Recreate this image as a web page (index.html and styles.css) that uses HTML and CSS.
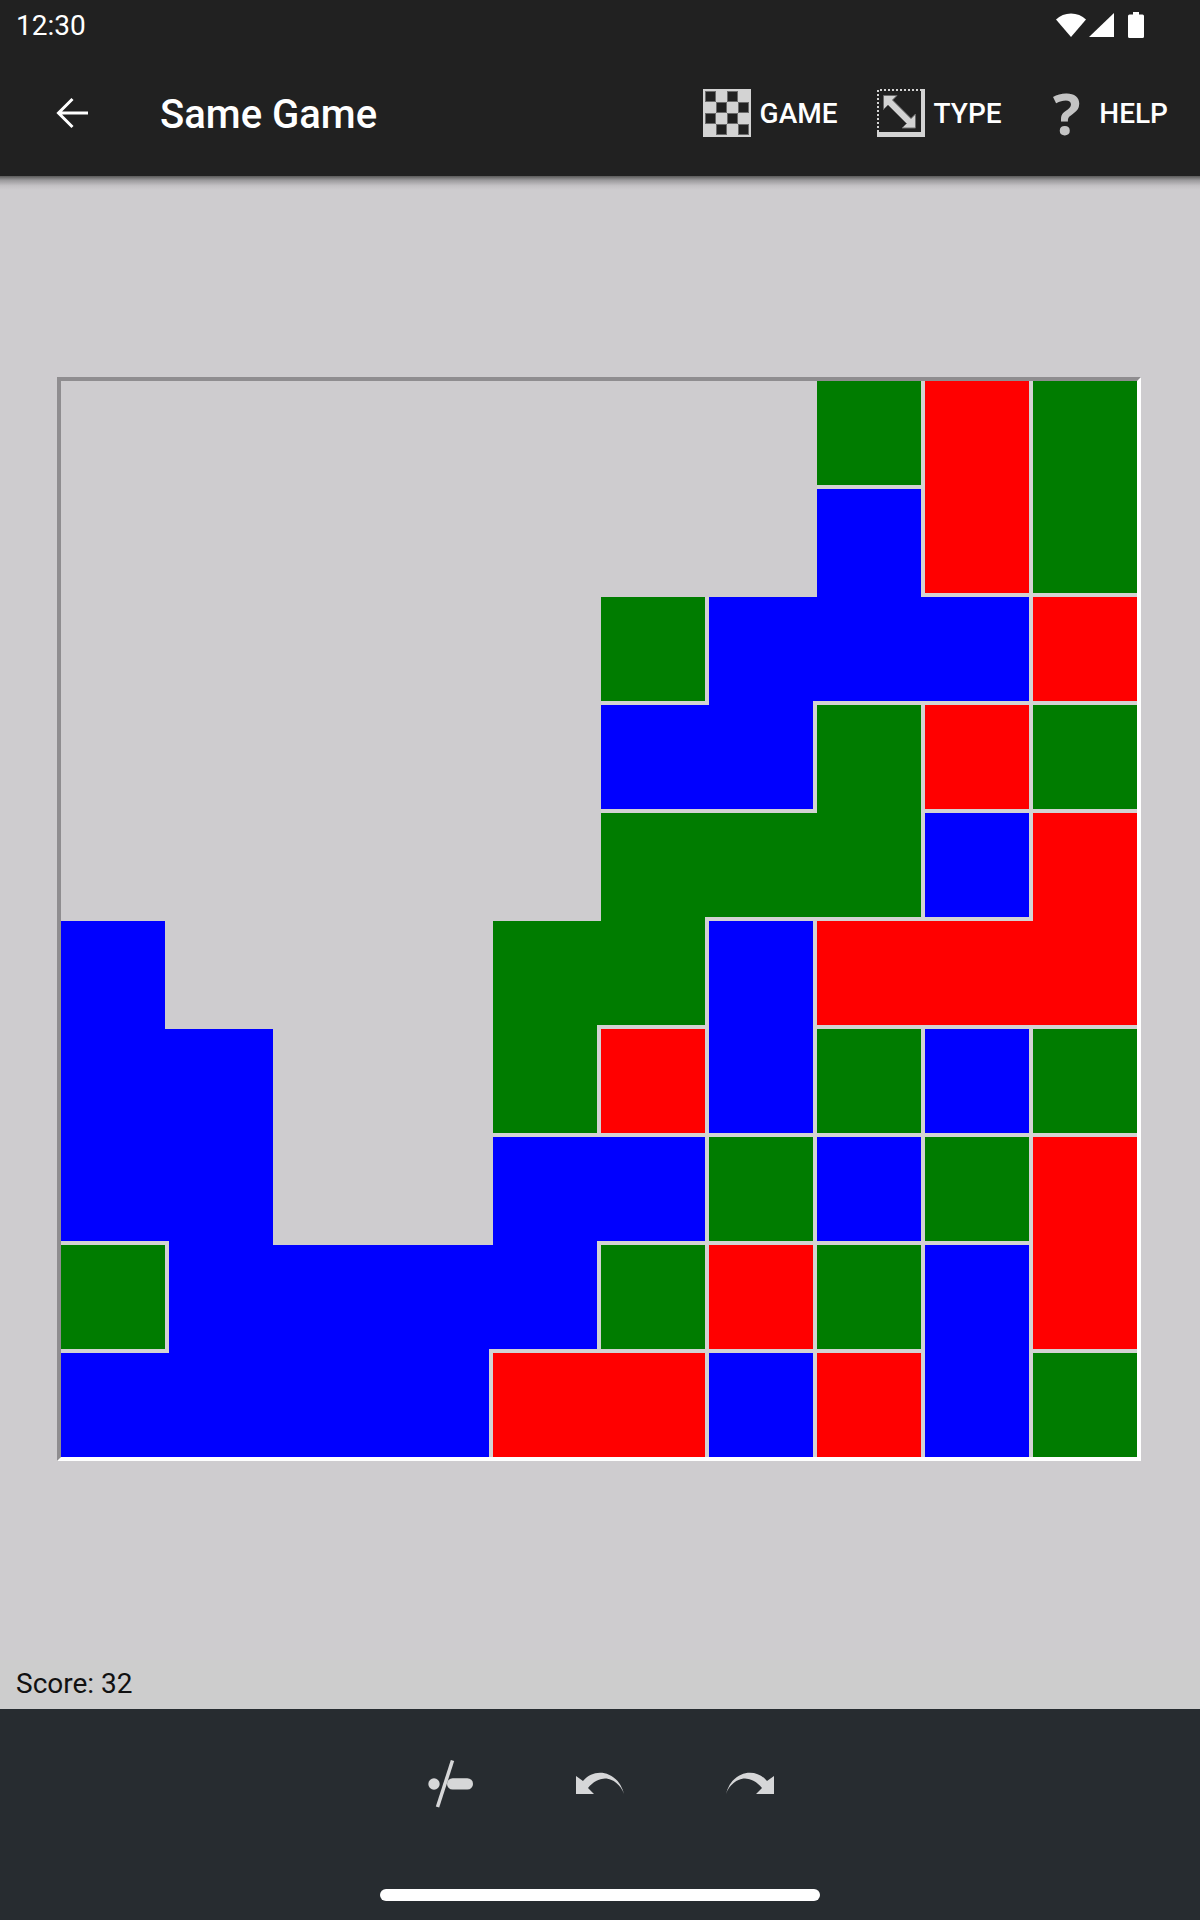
FILE: index.html
```html
<!DOCTYPE html>
<html lang="en">
  <head>
    <meta charset="UTF-8" />
    <meta name="viewport" content="width=device-width, initial-scale=1" />
    <title>Same Game</title>
    <link rel="stylesheet" href="styles.css">
  </head>
  <body>
    <header class="appbar">
      <div class="status">
        <span class="clock">12:30</span>
        <div class="status-icons">
          <svg class="ic-wifi" width="30" height="24" viewBox="0 0 30 24"><path d="M0 6.500C4 2.700 9.200.5 15 .5s11 2.200 15 6L15 24z" fill="#fff"/></svg>
          <svg class="ic-signal" width="25" height="24" viewBox="0 0 25 24"><path d="M25 0V24H0z" fill="#fff"/></svg>
          <svg class="ic-battery" width="16" height="26" viewBox="0 0 16 26"><path d="M5 0h6v2.500h3.500q1.500 0 1.500 1.500v20.500q0 1.500-1.500 1.500h-13q-1.500 0-1.500-1.500V4q0-1.500 1.500-1.500H5z" fill="#fff"/></svg>
        </div>
      </div>
      <div class="toolbar">
        <svg class="back" width="34" height="32" viewBox="0 0 34 32"><path d="M33 16H3M17.500 2L3.500 16l14 14" fill="none" stroke="#fff" stroke-width="3"/></svg>
        <h1 class="title">Same Game</h1>
        <nav class="menu">
          <div class="menu-item game">
            <svg width="48" height="48" viewBox="0 0 48 48">
              <rect width="48" height="48" fill="#d3d3d3"/>
              <g fill="#212121" stroke="#6a6a6a">
                <rect x="2.500" y="2.500" width="10" height="10"/>
                <rect x="24.500" y="2.500" width="10" height="10"/>
                <rect x="13.500" y="13.500" width="10" height="10"/>
                <rect x="35.500" y="13.500" width="10" height="10"/>
                <rect x="2.500" y="24.500" width="10" height="10"/>
                <rect x="24.500" y="24.500" width="10" height="10"/>
                <rect x="13.500" y="35.500" width="10" height="10"/>
                <rect x="35.500" y="35.500" width="10" height="10"/>
              </g>
            </svg>
            <span>GAME</span>
          </div>
          <div class="menu-item type">
            <svg width="48" height="48" viewBox="0 0 48 48">
              <path d="M44 0h4v48H0v-5h44z" fill="#d3d3d3"/>
              <path d="M1 43V1h43" fill="none" stroke="#d3d3d3" stroke-width="2" stroke-dasharray="2 2"/>
              <path d="M6.500 6.500H20L15.500 11 34 29.500l4.500-4.500V39H25l4.500-4.500L11 16l-4.500 4.500z" fill="#d3d3d3" stroke="#6a6a6a"/>
            </svg>
            <span>TYPE</span>
          </div>
          <div class="menu-item help">
            <b class="qmark">?</b>
            <span>HELP</span>
          </div>
        </nav>
      </div>
    </header>

    <main class="content">
      <div class="board">
        <div class="cell e"></div><div class="cell e"></div><div class="cell e"></div><div class="cell e"></div><div class="cell e"></div><div class="cell e"></div><div class="cell e"></div><div class="cell g r b"></div><div class="cell f r"></div><div class="cell g"></div>
        <div class="cell e"></div><div class="cell e"></div><div class="cell e"></div><div class="cell e"></div><div class="cell e"></div><div class="cell e"></div><div class="cell e"></div><div class="cell u r"></div><div class="cell f r b"></div><div class="cell g b"></div>
        <div class="cell e"></div><div class="cell e"></div><div class="cell e"></div><div class="cell e"></div><div class="cell e"></div><div class="cell g r b"></div><div class="cell u c"></div><div class="cell u b"></div><div class="cell u r b"></div><div class="cell f b"></div>
        <div class="cell e"></div><div class="cell e"></div><div class="cell e"></div><div class="cell e"></div><div class="cell e"></div><div class="cell u b"></div><div class="cell u r b"></div><div class="cell g r"></div><div class="cell f r b"></div><div class="cell g b"></div>
        <div class="cell e"></div><div class="cell e"></div><div class="cell e"></div><div class="cell e"></div><div class="cell e"></div><div class="cell g c"></div><div class="cell g b"></div><div class="cell g r b"></div><div class="cell u r b"></div><div class="cell f"></div>
        <div class="cell u r n"></div><div class="cell e"></div><div class="cell e"></div><div class="cell e"></div><div class="cell g c"></div><div class="cell g r b"></div><div class="cell u r"></div><div class="cell f b"></div><div class="cell f b"></div><div class="cell f b"></div>
        <div class="cell u"></div><div class="cell u r n"></div><div class="cell e"></div><div class="cell e"></div><div class="cell g r b"></div><div class="cell f r b"></div><div class="cell u r b"></div><div class="cell g r b"></div><div class="cell u r b"></div><div class="cell g b"></div>
        <div class="cell u b"></div><div class="cell u r n"></div><div class="cell e"></div><div class="cell e"></div><div class="cell u c"></div><div class="cell u r b"></div><div class="cell g r b"></div><div class="cell u r b"></div><div class="cell g r b"></div><div class="cell f"></div>
        <div class="cell g r b"></div><div class="cell u"></div><div class="cell u"></div><div class="cell u c"></div><div class="cell u r b"></div><div class="cell g r b"></div><div class="cell f r b"></div><div class="cell g r b"></div><div class="cell u r"></div><div class="cell f b"></div>
        <div class="cell u"></div><div class="cell u"></div><div class="cell u"></div><div class="cell u r"></div><div class="cell f"></div><div class="cell f r"></div><div class="cell u r"></div><div class="cell f r"></div><div class="cell u r"></div><div class="cell g"></div>
      </div>
      <p class="score">Score: 32</p>
    </main>

    <footer class="bottom">
      <div class="actions">
        <svg class="act" width="48" height="48" viewBox="0 0 48 48"><circle cx="8" cy="24" r="5.700" fill="#d6d7d8"/><rect x="21" y="18.200" width="26" height="11.400" rx="5.700" fill="#d6d7d8"/><path d="M26.500.500L11.500 47" stroke="#d6d7d8" stroke-width="3.500"/></svg>
        <svg class="act" width="48" height="48" viewBox="0 0 48 48"><path d="M0 16V34H18L12 28C17 22 23 18.500 29 18.500 37 18.500 45 25 48 34 45 21 35 12.700 24 12.700 17 12.700 11 16 7 21Z" fill="#d6d7d8"/></svg>
        <svg class="act flip" width="48" height="48" viewBox="0 0 48 48"><path d="M0 16V34H18L12 28C17 22 23 18.500 29 18.500 37 18.500 45 25 48 34 45 21 35 12.700 24 12.700 17 12.700 11 16 7 21Z" fill="#d6d7d8"/></svg>
      </div>
      <div class="home-pill"></div>
    </footer>
  </body>
</html>
```

FILE: styles.css
```css
html,
body {
  height: 100%;
  margin: 0;
  padding: 0;
  overflow: hidden;
}
body {
  display: flex;
  flex-direction: column;
  background: #cecccf;
  font-family: Roboto, "Liberation Sans", sans-serif;
}

.appbar {
  position: relative;
  background: #212121;
  color: #fff;
  height: 176px;
}
/* shadow that falls on the content */
.appbar::after {
  content: "";
  position: absolute;
  left: 0;
  right: 0;
  top: 176px;
  height: 14px;
  background: linear-gradient(#5a5a5a, #9a999b 30%, #c4c2c5 70%, #cecccf);
}

.status {
  height: 50px;
  display: flex;
  align-items: center;
  justify-content: space-between;
  padding: 0 56px 0 16px;
}
.clock {
  font-size: 28px;
  font-weight: 400;
}
.status-icons {
  display: flex;
  align-items: center;
  gap: 3px;
}
.ic-battery {
  margin-left: 11px;
}

.toolbar {
  height: 126px;
  display: flex;
  align-items: center;
  padding-right: 32px;
}
.back {
  margin-left: 55px;
}
.title {
  margin: 2px 0 0 71px;
  font-size: 40px;
  font-weight: 500;
}
.menu {
  margin-left: auto;
  display: flex;
  align-items: center;
}
.menu-item {
  display: flex;
  align-items: center;
  gap: 9px;
  font-size: 28px;
  font-weight: 500;
}
.menu-item svg {
  display: block;
}
.type {
  margin-left: 39px;
}
.help {
  margin-left: 51px;
  gap: 19px;
}
.qmark {
  font-family: "Noto Sans", sans-serif;
  font-size: 58px;
  line-height: 48px;
  color: #c4c4c4;
}

.content {
  flex: 1;
  display: flex;
  flex-direction: column;
  padding-top: 201px;
}
.board {
  box-sizing: border-box;
  width: 1084px;
  height: 1084px;
  margin-left: 57px;
  display: grid;
  /* 104px blocks with a 4px seam, the last line has no seam */
  grid-template-columns: repeat(9, 108px) 104px;
  grid-template-rows: repeat(9, 108px) 104px;
  border: 4px solid;
  border-color: #8f8d90 #fff #fff #8f8d90;
}
.cell {
  box-sizing: border-box;
  border: 0 solid #d3d3d3;
}
.e {
  border-width: 0 4px 4px 0;
  border-color: #cecccf;
}
.g { background: #007c00; }
.u { background: #0000ff; }
.f { background: #ff0000; }
.r { border-right-width: 4px; }
.b { border-bottom-width: 4px; }
/* seam next to an empty cell does not show */
.n { border-color: #cecccf; }
/* seams of the neighbours meet in this cell's corner */
.c {
  background-image: linear-gradient(#d3d3d3, #d3d3d3);
  background-size: 4px 4px;
  background-position: right bottom;
  background-repeat: no-repeat;
}

.score {
  margin: auto 0 0;
  padding: 9px 0 10px 16px;
  background: #cdcdcd;
  font-size: 28px;
  line-height: 30px;
  color: #111;
}

.bottom {
  height: 211px;
  background: #272c30;
  display: flex;
  flex-direction: column;
  align-items: center;
}
.actions {
  display: flex;
  gap: 102px;
  margin-top: 51px;
  margin-left: -1px;
}
.flip {
  transform: scaleX(-1);
}
.home-pill {
  margin-top: 81px;
  width: 440px;
  height: 12px;
  border-radius: 6px;
  background: #fff;
}
```
